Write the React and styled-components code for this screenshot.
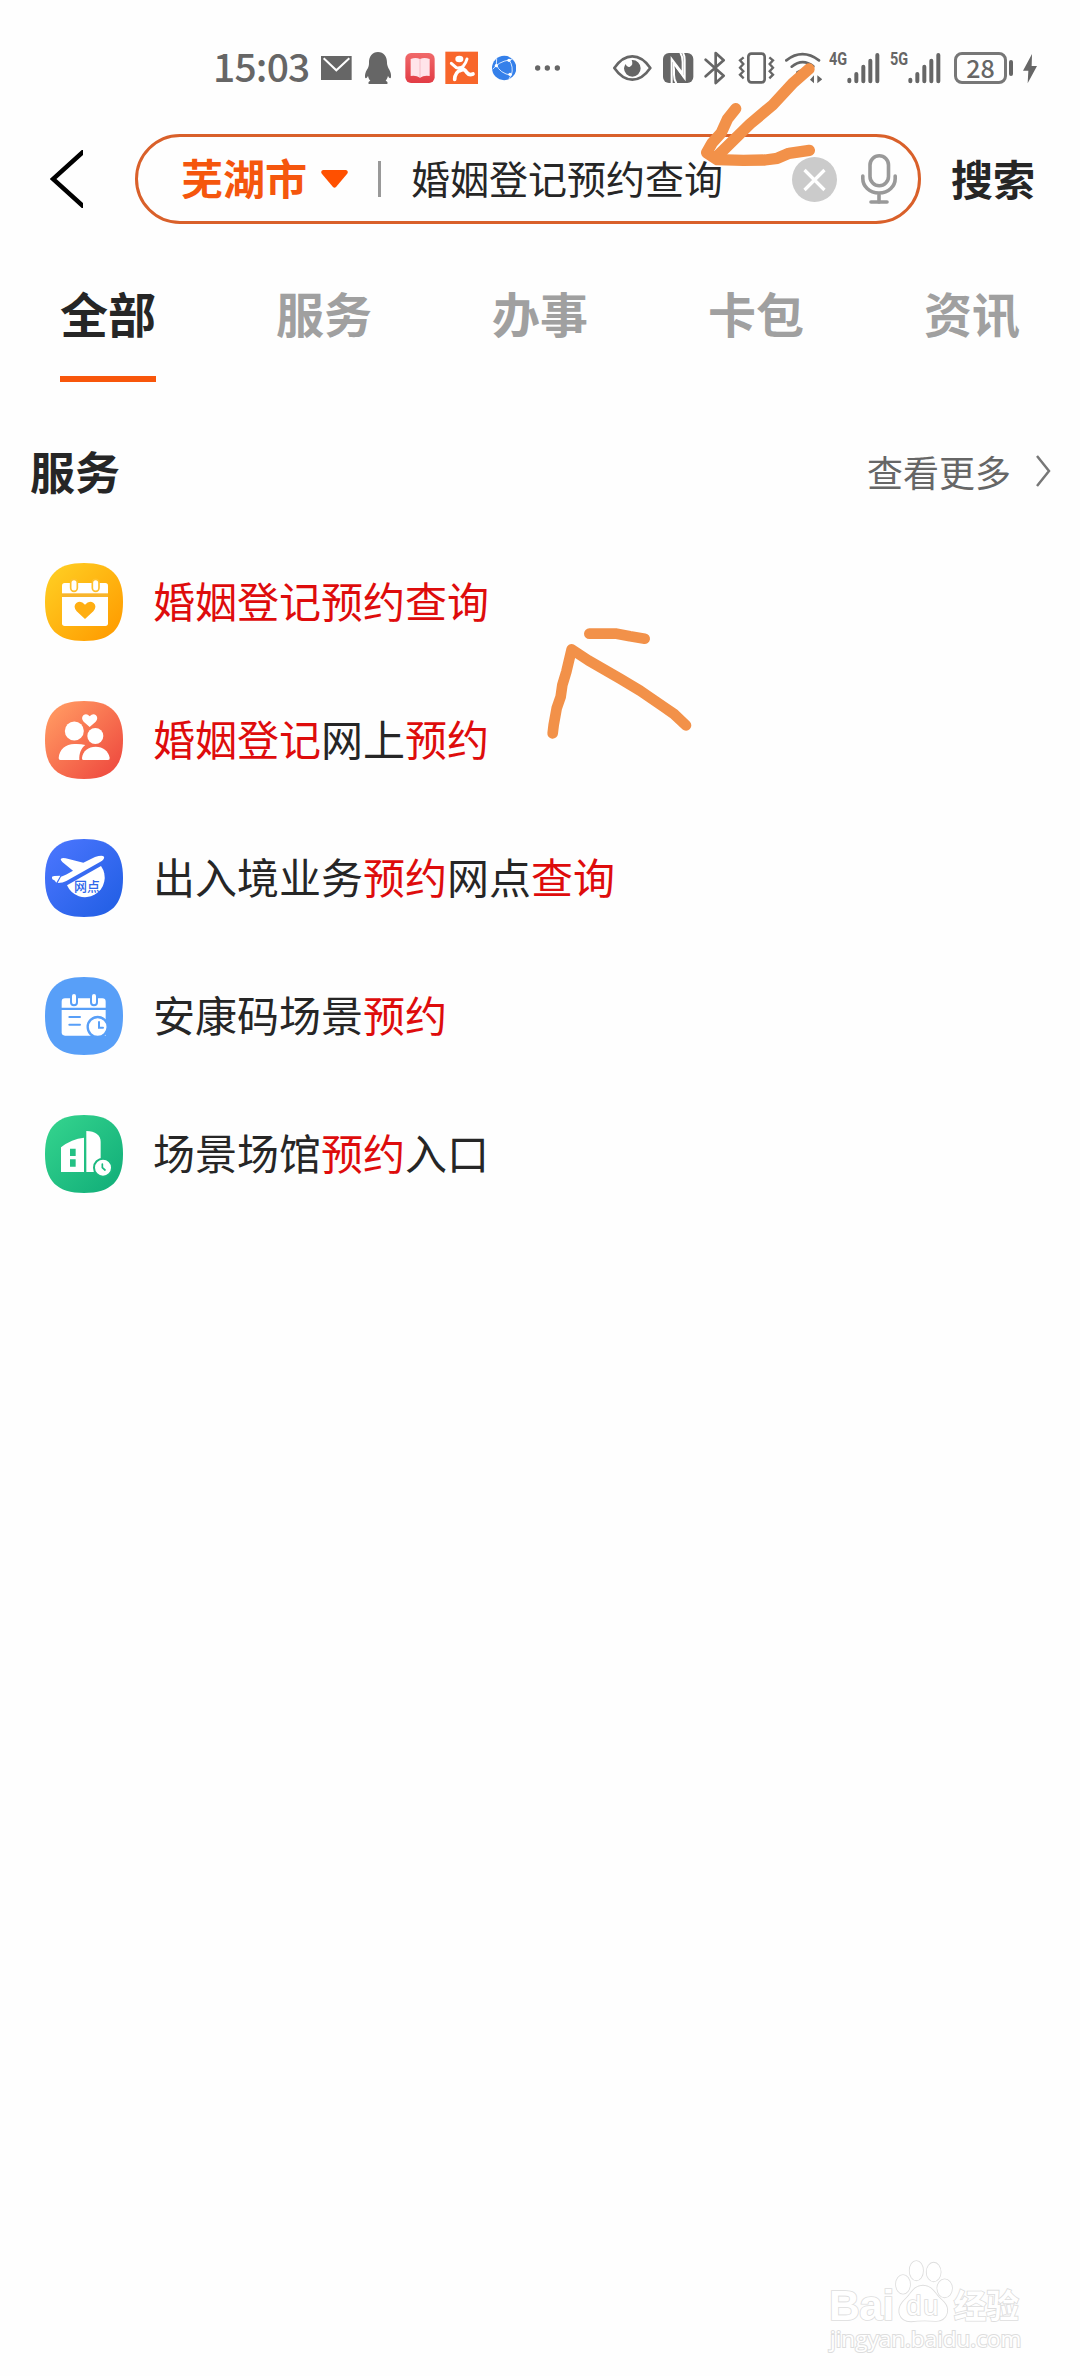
import React from 'react';
import styled, { createGlobalStyle } from 'styled-components';

const GlobalStyle = createGlobalStyle`
  * {
    box-sizing: border-box;
  }
  body {
    margin: 0;
    background: #fefefe;
    font-family: "Noto Sans CJK SC", "Noto Sans", sans-serif;
    color: #262626;
  }
  svg {
    display: block;
    flex: none;
  }
`

const Page = styled.div`
  position: relative;
  width: 1080px;
  height: 2376px;
  overflow: hidden;
  display: flex;
  flex-direction: column;
`

const StatusBar = styled.header`
  height: 134px;
  padding: 46px 0 0 213px;
  display: flex;
  align-items: flex-start;
  color: #666666;
`

const Time = styled.span`
  flex: none;
  width: 108px;
  height: 44px;
  margin-top: -1px;
  font-size: 39px;
  font-weight: 500;
  line-height: 40px;
  letter-spacing: -0.8px;
  white-space: nowrap;
`

const StatusIcon = styled.svg`
  height: 44px;
  margin-left: ${(p) => p.$gap || 0}px;
`

const Network = styled.span`
  flex: none;
  width: 18px;
  margin-left: ${(p) => p.$gap}px;
  margin-top: 3px;
  font-family: Roboto, sans-serif;
  font-size: 19px;
  font-weight: 700;
  line-height: 20px;
  transform: scaleX(0.76);
  transform-origin: left;
`

const Battery = styled.div`
  flex: none;
  width: 53px;
  height: 32px;
  margin: 6px 0 0 13px;
  padding-bottom: 2px;
  border: 3px solid #777777;
  border-radius: 8px;
  display: flex;
  align-items: center;
  justify-content: center;
  font-size: 25px;
  font-weight: 500;
  line-height: 24px;
`

const BatteryCap = styled.div`
  flex: none;
  width: 4px;
  height: 16px;
  margin: 14px 10px 0 2px;
  border-radius: 2px;
  background: #666666;
`

const SearchRow = styled.div`
  height: 90px;
  padding-left: 50px;
  display: flex;
  align-items: center;
`

const SearchBox = styled.div`
  width: 786px;
  height: 90px;
  margin-left: 52px;
  padding: 0 21px 0 43px;
  border: 3px solid #d9602a;
  border-radius: 45px;
  display: flex;
  align-items: center;
`

const City = styled.span`
  width: 140px;
  margin-top: -5px;
  font-size: 42px;
  font-weight: 700;
  line-height: 60px;
  color: #f5560d;
`

const Divider = styled.div`
  width: 3px;
  height: 36px;
  margin: 0 30px;
  background: #999999;
`

const Keyword = styled.span`
  flex: 1;
  margin-top: -5px;
  font-size: 39px;
  line-height: 60px;
`

const SearchButton = styled.span`
  margin: -2px 0 0 30px;
  font-size: 42px;
  font-weight: 700;
  line-height: 60px;
`

const Tabs = styled.nav`
  height: 158px;
  display: grid;
  grid-template-columns: repeat(5, 1fr);
  justify-items: center;
`

const Tab = styled.div`
  width: 96px;
  height: 158px;
  padding-top: 53px;
  font-size: 48px;
  font-weight: 700;
  line-height: 70px;
  color: ${(p) => (p.$active ? '#262626' : '#a0a0a0')};
  border-bottom: 6px solid ${(p) => (p.$active ? '#f8560b' : 'transparent')};
`

const SectionHead = styled.div`
  height: 151px;
  padding: 54px 29px 0 30px;
  display: flex;
  justify-content: space-between;
  align-items: flex-start;
`

const SectionTitle = styled.h2`
  margin: 0;
  font-size: 45px;
  font-weight: 700;
  line-height: 70px;
`

const More = styled.div`
  display: flex;
  align-items: center;
  font-size: 36px;
  line-height: 70px;
  color: #666666;
  svg {
    margin: 0 0 0 24px;
  }
`

const Row = styled.div`
  height: 138px;
  padding-left: 45px;
  display: flex;
  align-items: center;
`

const Label = styled.span`
  margin: -4px 0 0 30px;
  font-size: 42px;
  line-height: 60px;
`

const Hit = styled.span`
  color: #de0c0c;
`

// Hand drawn marks lie over the page
const Mark = styled.svg`
  position: absolute;
  left: ${(p) => p.$x}px;
  top: ${(p) => p.$y}px;
  fill: none;
  stroke: #f29149;
  stroke-linecap: round;
  stroke-linejoin: round;
`

const Watermark = styled.footer`
  margin: auto 55px 0 auto;
  height: 120px;
  width: 200px;
`

const WatermarkUrl = styled.div`
  margin-top: -7px;
  padding-left: 5px;
  font-family: "Open Sans", sans-serif;
  font-size: 22.5px;
  line-height: 32px;
  white-space: nowrap;
  color: #ffffff;
  -webkit-text-stroke: 2px #dddddd;
  paint-order: stroke;
`

const MailIcon = () => (
  <StatusIcon viewBox="362 18 92 132">
    <rect x="362" y="48" width="92" height="72" fill="#666" />
    <path d="M370 55L408 91L447 55" fill="none" stroke="#fff" strokeWidth="6" />
  </StatusIcon>
)

const PenguinIcon = () => (
  <StatusIcon viewBox="495 18 79 132" $gap={13.5}>
    <path fill="#666" d="M534 36C551 36 561 49 561 67C561 74 562 77 565 84C571 93 574 102 573 112C571 118 566 113 564 107C563 113 560 118 557 122C564 125 565 132 559 132H509C503 132 504 125 511 122C507 118 505 113 504 107C502 113 497 118 495 112C494 102 498 93 504 84C507 77 507 74 507 67C507 49 517 36 534 36Z" />
  </StatusIcon>
)

const BookIcon = () => (
  <StatusIcon viewBox="615 18 90 132" $gap={13.5}>
    <defs>
      <linearGradient id="book" x2="0" y2="1">
        <stop stopColor="#f0696a" />
        <stop offset="1" stopColor="#e23c45" />
      </linearGradient>
    </defs>
    <rect x="616" y="39" width="88" height="90" rx="17" fill="url(#book)" />
    <path d="M632 57Q647 51 660 57Q673 51 689 57V108Q672 105 660 113Q648 105 632 108Z" fill="#ffe4ea" />
    <path d="M660 57V112" stroke="#f5bcc6" strokeWidth="3" />
  </StatusIcon>
)

const RunnerIcon = () => (
  <StatusIcon viewBox="736 18 100 132" $gap={10}>
    <rect x="737" y="35" width="98" height="97" fill="#f8662b" />
    <ellipse cx="779" cy="57" rx="12" ry="10" fill="#fff" />
    <path d="M755 70L770 83Q781 87 791 78Q799 69 802 57" fill="none" stroke="#fff" strokeWidth="9" strokeLinecap="round" />
    <path d="M776 80L792 78L797 91L780 98Z" fill="#fff" />
    <path d="M765 118Q766 97 784 89Q794 85 801 97Q808 107 820 102" fill="none" stroke="#fff" strokeWidth="11" strokeLinecap="round" />
  </StatusIcon>
)

const GlobeIcon = () => (
  <StatusIcon viewBox="876 18 74 132" $gap={13.5}>
    <circle cx="912.500" cy="84" r="36.500" fill="#3580ea" />
    <g fill="none" stroke="#d5e7ff" strokeWidth="3">
      <path d="M927 60Q896 65 878 88" />
      <path d="M927 60Q942 80 934 106" />
      <path d="M889 74Q899 100 934 106" />
      <path d="M890 55L889 76" />
      <path d="M927 60L938 57M934 104L927 117" />
    </g>
    <g fill="#fff">
      <circle cx="927" cy="61" r="5" />
      <circle cx="889" cy="77" r="5" />
      <circle cx="930" cy="103" r="5" />
    </g>
  </StatusIcon>
)

const DotsIcon = () => (
  <StatusIcon viewBox="1005 18 76 132" $gap={18.5} fill="#666">
    <circle cx="1013" cy="84" r="8" />
    <circle cx="1042" cy="84" r="8" />
    <circle cx="1072" cy="84" r="8" />
  </StatusIcon>
)

const EyeIcon = () => (
  <StatusIcon viewBox="41 18 116 132" $gap={53}>
    <path d="M45 84Q69 49 99 49T153 84Q129 119 99 119T45 84Z" fill="none" stroke="#666" strokeWidth="8" strokeLinejoin="round" />
    <path d="M99 60A25 25 0 1 1 74 85Q75 77 79 72Q82 83 92 80Q103 75 97 60Z" fill="#666" />
  </StatusIcon>
)

const NfcIcon = () => (
  <StatusIcon viewBox="190 18 91 132" $gap={11.500}>
    <rect x="190" y="39" width="91" height="90" rx="18" fill="#666" />
    <g fill="none" stroke="#fff" strokeWidth="6">
      <path d="M216 130V57L249 101V66Q249 49 242 38" />
      <path d="M230 130Q223 119 223 104V73L255 115V60Q255 46 250 38" />
    </g>
    <path d="M224 78L247 110V114L226 88Z" fill="#666" />
  </StatusIcon>
)

const BluetoothIcon = () => (
  <StatusIcon viewBox="313 18 66 132" $gap={10.500}>
    <path d="M318 59L372 107L348 129V39L372 61L318 109" fill="none" stroke="#666" strokeWidth="8" strokeLinecap="round" strokeLinejoin="round" />
  </StatusIcon>
)

const VibrateIcon = () => (
  <StatusIcon viewBox="413 18 111 132" $gap={12} fill="none" stroke="#666" strokeWidth="8">
    <rect x="444" y="41" width="49" height="86" rx="9" />
    <path d="M430 52L419 61L429 72L419 83L429 94L419 104L430 115" strokeWidth="7" />
    <path d="M507 52L518 61L508 72L518 83L508 94L518 104L507 115" strokeWidth="7" />
  </StatusIcon>
)

const WifiIcon = () => (
  <StatusIcon viewBox="553 18 112 132" $gap={9.500} fill="none" stroke="#666" strokeWidth="8" strokeLinecap="round">
    <path d="M557 61Q605 24 655 61" />
    <path d="M573 80Q606 53 638 79" />
    <path d="M590 97Q606 86 622 97" />
    <path d="M640 106V130L628 119ZM650 106V130L665 118Z" fill="#666" stroke="none" />
  </StatusIcon>
)

const SignalIcon = () => (
  <StatusIcon viewBox="740 18 98 132" stroke="#666" strokeWidth="12" strokeLinecap="round">
    <path d="M747 119V124M768 102V124M789 80V124M810 62V124M831 45V124" />
  </StatusIcon>
)

const BoltIcon = () => (
  <StatusIcon viewBox="1265 18 42 132" fill="#666">
    <path d="M1292 42L1265 92H1281L1279 130L1307 78H1291Z" />
  </StatusIcon>
)

const BackIcon = () => (
  <svg width="33" height="58" viewBox="0 0 33 58" fill="none" stroke="#000" strokeWidth="4.500">
    <path d="M34 1L3 29L34 57" />
  </svg>
)

const ClearIcon = () => (
  <svg width="45" height="45" viewBox="0 0 45 45">
    <circle cx="22.500" cy="22.500" r="22.500" fill="#cbcbcb" />
    <path d="M12.500 13L32.500 33M32.500 13L12.500 33" stroke="#fff" strokeWidth="3.200" />
  </svg>
)

const MicIcon = () => (
  <svg width="60" height="50" viewBox="-24 0 60 50" fill="none" stroke="#999" strokeWidth="3.600">
    <rect x="9" y="1.800" width="18.500" height="30" rx="9.250" />
    <path d="M1.800 22V24.500C1.800 32 8 39 18 39S34.200 32 34.200 24.500V22M18 39V48" strokeLinecap="round" />
    <path d="M10 48H26" strokeLinecap="round" />
  </svg>
)

const Badge = ({ id, from, to, children }) => (
  <svg width="78" height="78" viewBox="0 0 234 234">
    <defs>
      <linearGradient id={id} x2="1" y2="1">
        <stop offset="0.150" stopColor={from} />
        <stop offset="0.850" stopColor={to} />
      </linearGradient>
    </defs>
    <path d="M117 0C198 0 234 36 234 117S198 234 117 234S0 198 0 117S36 0 117 0Z" fill={`url(#${id})`} />
    {children}
  </svg>
)

const CalendarHeart = () => (
  <Badge id="yellow" from="#ffc91f" to="#ffa003">
    <rect x="51" y="60" width="138" height="129" rx="8" fill="#fff" />
    <rect x="51" y="91" width="138" height="11" fill="#f8b52c" />
    <g fill="#fff" stroke="#ffc02a" strokeWidth="5">
      <rect x="77" y="49" width="20" height="36" rx="10" />
      <rect x="142" y="49" width="20" height="36" rx="10" />
    </g>
    <path d="M120 168L95 145Q83 130 94 120Q107 110 120 125Q133 110 146 120Q157 130 145 145Z" fill="#ffae12" />
  </Badge>
)

const Couple = () => (
  <Badge id="coral" from="#ff935f" to="#f05142">
    <g fill="#fff">
      <circle cx="88" cy="90" r="28.500" />
      <circle cx="151" cy="105" r="24" />
      <path d="M134 78L116 62Q107 52 115 43Q125 36 134 46Q144 36 153 43Q161 52 152 62Z" />
      <path d="M46 177Q41 177 41 171C43 145 62 129 88 129Q106 128 121 132C108 142 102 157 103 177Z" />
      <path d="M115 177Q110 177 111 170C114 150 130 137 152 137S190 150 194 170Q195 177 189 177Z" />
    </g>
  </Badge>
)

const Plane = () => (
  <Badge id="blue" from="#4673fb" to="#2661e7">
    <g fill="#fff">
      <path d="M47 62Q47 55 62 58L115 71L150 54Q172 47 177 53Q180 60 165 69L64 126Q54 132 38 132L48 113Q62 108 84 95L52 69Z" />
      <path d="M21 116Q20 111 28 111L46 110L34 131Q30 124 22 121Z" />
      <path d="M66 139L168 81A59 59 0 1 1 66 139Z" />
    </g>
    <text x="87" y="157" fontSize="39" fontWeight="500" fill="#2f66ea">网点</text>
  </Badge>
)

const CalendarClock = () => (
  <Badge id="sky" from="#589ff8" to="#589ff8">
    <path d="M60 64H172Q182 64 182 74V92H50V74Q50 64 60 64Z" fill="#fff" />
    <path d="M50 99H182V176H60Q50 176 50 166Z" fill="#fff" />
    <g fill="#fff" stroke="#589ff8" strokeWidth="6">
      <rect x="78" y="48" width="18" height="37" rx="9" />
      <rect x="138" y="48" width="18" height="37" rx="9" />
    </g>
    <path d="M73 120H105M73 143H105" stroke="#589ff8" strokeWidth="6" strokeLinecap="round" />
    <circle cx="158" cy="150" r="30" fill="#fff" stroke="#589ff8" strokeWidth="7" />
    <path d="M162 135V152H174" fill="none" stroke="#589ff8" strokeWidth="6" strokeLinecap="round" />
  </Badge>
)

const Building = () => (
  <Badge id="green" from="#30cf8b" to="#15b27b">
    <path d="M48 171V97Q80 71 117 68V171Z" fill="#fff" />
    <path d="M124 171V48C151 48 167 61 167 80V171Z" fill="#fff" />
    <path d="M75 101H92V123H75ZM75 133H92V155H75Z" fill="#23c184" />
    <circle cx="174" cy="158" r="27" fill="#fff" stroke="#1bb980" strokeWidth="6" />
    <path d="M172 147V158L180 165" fill="none" stroke="#1bb980" strokeWidth="5" strokeLinecap="round" />
  </Badge>
)

const tabs = ['全部', '服务', '办事', '卡包', '资讯'];

// [text, highlighted]
const services = [
  { icon: CalendarHeart, parts: [['婚姻登记预约查询', true]] },
  { icon: Couple, parts: [['婚姻登记', true], ['网上'], ['预约', true]] },
  { icon: Plane, parts: [['出入境业务'], ['预约', true], ['网点'], ['查询', true]] },
  { icon: CalendarClock, parts: [['安康码场景'], ['预约', true]] },
  { icon: Building, parts: [['场景场馆'], ['预约', true], ['入口']] },
];

const App = () => {
  return <Page>
    <GlobalStyle />
    <StatusBar>
      <Time>15:03</Time>
      <MailIcon />
      <PenguinIcon />
      <BookIcon />
      <RunnerIcon />
      <GlobeIcon />
      <DotsIcon />
      <EyeIcon />
      <NfcIcon />
      <BluetoothIcon />
      <VibrateIcon />
      <WifiIcon />
      <Network $gap={7}>4G</Network>
      <SignalIcon />
      <Network $gap={10.5}>5G</Network>
      <SignalIcon />
      <Battery>28</Battery>
      <BatteryCap />
      <BoltIcon />
    </StatusBar>

    <SearchRow>
      <BackIcon />
      <SearchBox>
        <City>芜湖市</City>
        <svg width="27" height="18" viewBox="0 0 27 18" fill="#ff5000">
          <path d="M2 0H25Q28 1 26 4L15 17Q13.500 18.500 12 17L1 4Q-1 1 2 0Z" />
        </svg>
        <Divider />
        <Keyword>婚姻登记预约查询</Keyword>
        <ClearIcon />
        <MicIcon />
      </SearchBox>
      <SearchButton>搜索</SearchButton>
    </SearchRow>

    <Tabs>
      {tabs.map((name, i) => <Tab key={name} $active={i === 0}>{name}</Tab>)}
    </Tabs>

    <SectionHead>
      <SectionTitle>服务</SectionTitle>
      <More>
        查看更多
        <svg width="16" height="32" viewBox="0 0 16 32" fill="none" stroke="#777" strokeWidth="2.500">
          <path d="M2 1L14 16L2 31" />
        </svg>
      </More>
    </SectionHead>

    {services.map(({ icon: Icon, parts }, i) => (
      <Row key={i}>
        <Icon />
        <Label>
          {parts.map(([text, hit], n) => hit ? <Hit key={n}>{text}</Hit> : text)}
        </Label>
      </Row>
    ))}

    <Watermark>
      <svg width="200" height="74" viewBox="72 48 600 222" fill="#fff" stroke="#ddd" strokeWidth="5" paintOrder="stroke">
        <ellipse cx="346" cy="92" rx="20" ry="29" />
        <ellipse cx="398" cy="96" rx="21" ry="28" />
        <ellipse cx="306" cy="133" rx="21" ry="28" />
        <ellipse cx="431" cy="145" rx="22" ry="27" />
        <path d="M366 137C395 137 402 164 423 181C451 205 439 242 405 243Q366 239 330 244C294 244 283 208 310 181C330 164 337 137 366 137Z" />
        <text x="84" y="241" fontFamily="Liberation Sans" fontWeight="700" fontSize="128" textLength="196">Bai</text>
        <text x="316" y="226" fontFamily="Liberation Sans" fontSize="82" textLength="96">du</text>
        <text x="458" y="233" fontWeight="700" fontSize="98">经验</text>
      </svg>
      <WatermarkUrl>jingyan.baidu.com</WatermarkUrl>
    </Watermark>

    <Mark $x={660} $y={50} width="200" height="130" viewBox="0 0 600 390" strokeWidth="34">
      <path d="M447 57L400 98L338 165L270 222L168 322" />
      <path d="M227 176L203 206L184 248L157 278L140 308L172 329L250 331L315 330L352 325L387 310L448 301" />
    </Mark>
    <Mark $x={520} $y={610} width="200" height="150" viewBox="0 0 600 450" strokeWidth="32">
      <path d="M208 71H290L330 79L374 86" />
      <path d="M98 370L101 345L110 295L122 260L127 225L139 185L155 118L205 151L300 206L360 242L430 290L462 312L498 346" />
    </Mark>
  </Page>
}

export default App;
